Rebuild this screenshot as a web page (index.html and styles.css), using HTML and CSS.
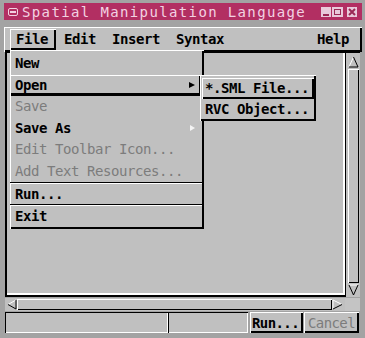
FILE: index.html
```html
<!DOCTYPE html>
<html lang="en">
<head>
    <meta charset="UTF-8">
    <title>Spatial Manipulation Language</title>
    <link rel="stylesheet" href="styles.css">
</head>
<body>
    <div class="window">
        <div class="titlebar">
            <svg class="sysmenu" width="10" height="8" viewBox="0 0 10 8">
                <rect x="0.5" y="0.5" width="9" height="7" rx="1.5" fill="none" stroke="#f2d2e2"/>
                <rect x="2" y="3" width="6" height="2" fill="#f2d2e2"/>
            </svg>
            <span class="title">Spatial Manipulation Language</span>
            <div class="winbtns">
                <svg class="wbtn" width="10" height="10" viewBox="0 0 10 10">
                    <rect width="10" height="10" fill="#e9cadb"/>
                    <rect x="2" y="7" width="6" height="2" fill="#9a2a55"/>
                </svg>
                <svg class="wbtn" width="11" height="10" viewBox="0 0 11 10">
                    <rect width="11" height="10" fill="#e9cadb"/>
                    <rect x="2.5" y="2.5" width="6" height="5" fill="none" stroke="#9a2a55"/>
                </svg>
                <svg class="wbtn close" width="10" height="10" viewBox="0 0 10 10">
                    <rect width="10" height="10" fill="#e9cadb"/>
                    <path d="M2 2 L8 8 M8 2 L2 8" stroke="#9a2a55" stroke-width="2"/>
                </svg>
            </div>
        </div>

        <div class="menubar">
            <span class="menu-item active">File</span>
            <span class="menu-item">Edit</span>
            <span class="menu-item">Insert</span>
            <span class="menu-item">Syntax</span>
            <span class="menu-item help">Help</span>
        </div>

        <div class="editor">
            <div class="text-area"></div>
            <div class="vscroll">
                <svg class="arrow" width="11" height="12" viewBox="0 0 11 12">
                    <path d="M1 11 L5.5 1" stroke="#fff" fill="none"/>
                    <path d="M5.5 1 L10 11 L1 11" stroke="#000" fill="none"/>
                </svg>
                <div class="vthumb"></div>
                <svg class="arrow" width="11" height="12" viewBox="0 0 11 12">
                    <path d="M1 1 L10 1" stroke="#fff" fill="none"/>
                    <path d="M1 1 L5.5 11 L10 1" stroke="#000" fill="none"/>
                </svg>
            </div>
        </div>

        <div class="hscroll-row">
            <div class="hscroll">
                <svg class="arrow" width="10" height="11" viewBox="0 0 10 11">
                    <path d="M9 1 L1 5.5" stroke="#fff" fill="none"/>
                    <path d="M1 5.5 L9 10 L9 1" stroke="#000" fill="none"/>
                </svg>
                <div class="hthumb"></div>
                <svg class="arrow" width="11" height="11" viewBox="0 0 11 11">
                    <path d="M1 10 L1 1 L10 5.5" stroke="#fff" fill="none"/>
                    <path d="M10 5.5 L1 10" stroke="#000" fill="none"/>
                </svg>
            </div>
            <div class="corner"></div>
        </div>

        <div class="statusbar">
            <div class="field wide"></div>
            <div class="field"></div>
            <button class="btn">Run...</button>
            <button class="btn disabled">Cancel</button>
        </div>

        <div class="dropdown">
            <div class="dd-item">New</div>
            <div class="dd-item active">Open<span class="submark"></span></div>
            <div class="dd-item disabled">Save</div>
            <div class="dd-item">Save As<span class="submark light"></span></div>
            <div class="dd-item disabled">Edit Toolbar Icon...</div>
            <div class="dd-item disabled">Add Text Resources...</div>
            <div class="separator"></div>
            <div class="dd-item short">Run...</div>
            <div class="separator"></div>
            <div class="dd-item">Exit</div>
        </div>

        <div class="submenu">
            <div class="sub-item active">*.SML File...</div>
            <div class="sub-item">RVC Object...</div>
        </div>
    </div>
</body>
</html>
```

FILE: styles.css
```css
* {
    margin: 0;
    padding: 0;
    box-sizing: border-box;
}

body {
    background-color: #a3a3a3;
    font-family: "DejaVu Sans Mono", "Liberation Mono", monospace;
    color: #000;
}

.window {
    position: relative;
    width: 365px;
    height: 338px;
    overflow: hidden;
}

.titlebar {
    display: flex;
    align-items: center;
    height: 17px;
    margin: 3px 3px 0 4px;
    background: #b22f62;
    color: #f2d2e2;
}

.sysmenu {
    margin-left: 4px;
}

.title {
    margin-left: 4px;
    font-size: 14px;
    letter-spacing: 1.37px;
}

.winbtns {
    display: flex;
    gap: 1px;
    margin-left: auto;
    margin-right: 5px;
}

.wbtn.close {
    margin-left: 3px;
}

.menubar {
    display: flex;
    align-items: center;
    height: 25px;
    margin: 7px 3px 0 4px;
    padding-left: 4px;
    background: #c0c0c0;
    box-shadow: inset 1px 1px #fff, inset -2px -2px #000;
    font-size: 14px;
    font-weight: bold;
    letter-spacing: -0.43px;
}

.menu-item {
    height: 21px;
    line-height: 21px;
    padding: 0 8px;
}

.menu-item.active {
    margin-left: 2px;
    padding-left: 6px;
    box-shadow: inset 1px 1px #fff, inset -2px -2px #000;
}

.menu-item.help {
    margin-left: auto;
    margin-right: 5px;
}

.editor {
    display: flex;
    width: 355px;
    height: 245px;
    margin-left: 5px;
}

.text-area {
    flex: 1;
    background: #c0c0c0;
    border-top: 1px solid #000;
    border-left: 2px solid #000;
    border-bottom: 2px solid #000;
    box-shadow: inset -2px -2px #fff;
}

.vscroll {
    width: 15px;
    display: flex;
    flex-direction: column;
    align-items: center;
    padding: 3px 0 1px;
    background: #c0c0c0;
    border-left: 1px solid #000;
    border-top: 1px solid #000;
}

.vthumb {
    flex: 1;
    width: 11px;
    margin: 1px 0;
    box-shadow: inset 1px 1px #fff, inset -1px -1px #000;
}

.hscroll-row {
    display: flex;
    height: 13px;
    margin: 1px 0 0 5px;
}

.hscroll {
    width: 340px;
    display: flex;
    align-items: center;
    padding: 0 2px 0 2px;
    background: #c0c0c0;
}

.hthumb {
    flex: 1;
    height: 11px;
    box-shadow: inset 1px 1px #fff, inset -1px -1px #000;
}

.corner {
    width: 15px;
    background: #c4c4c4;
}

.statusbar {
    display: flex;
    height: 21px;
    margin: 1px 0 0 5px;
}

.field {
    width: 80px;
    background: #c0c0c0;
    box-shadow: inset 1px 1px #000, inset -1px -1px #fff;
}

.field.wide {
    width: 163px;
}

.btn {
    width: 53px;
    margin-left: 2px;
    padding-left: 2px;
    border: none;
    background: #c0c0c0;
    box-shadow: inset 1px 1px #fff, inset -2px -2px #000;
    font-family: inherit;
    font-size: 14px;
    font-weight: bold;
    letter-spacing: -0.6px;
    text-align: left;
    color: #000;
}

.btn.disabled {
    width: 55px;
    margin-left: 1px;
    padding-left: 4px;
    font-weight: normal;
    color: #7c7c7c;
}

.dropdown {
    position: absolute;
    left: 10px;
    top: 50px;
    width: 194px;
    height: 179px;
    padding-top: 3px;
    background: #c0c0c0;
    box-shadow: inset 1px 1px #fff, inset -2px -2px #000;
    font-size: 14px;
    font-weight: bold;
    letter-spacing: -0.43px;
}

.dd-item {
    position: relative;
    height: 21.5px;
    line-height: 21.5px;
    padding-left: 5px;
    margin-right: 2px;
}

.dd-item.active {
    box-shadow: inset 1px 1px #fff, inset -3px -3px #000;
}

.dd-item.disabled {
    font-weight: normal;
    color: #7c7c7c;
}

.dd-item.short {
    height: 20px;
    line-height: 20px;
}

.separator {
    height: 2px;
    margin-right: 2px;
    border-top: 1px solid #000;
    border-bottom: 1px solid #fff;
}

.submark {
    position: absolute;
    right: 7px;
    top: 7px;
    width: 0;
    height: 0;
    border-left: 6px solid #000;
    border-top: 3px solid transparent;
    border-bottom: 3px solid transparent;
}

.submark.light {
    border-left-color: #f4f4f4;
    border-left-width: 5px;
}

.submenu {
    position: absolute;
    left: 200px;
    top: 75px;
    width: 116px;
    height: 46px;
    padding: 3px 0 0 2px;
    background: #c0c0c0;
    box-shadow: inset 1px 1px #fff, inset -2px -2px #000;
    font-size: 14px;
    font-weight: bold;
    letter-spacing: -0.43px;
}

.sub-item {
    height: 21px;
    line-height: 21px;
    padding-left: 3px;
    margin-right: 2px;
}

.sub-item.active {
    box-shadow: inset 1px 1px #fff, inset -2px -2px #000;
}

.sub-item + .sub-item {
    height: 20px;
    line-height: 20px;
}
```
